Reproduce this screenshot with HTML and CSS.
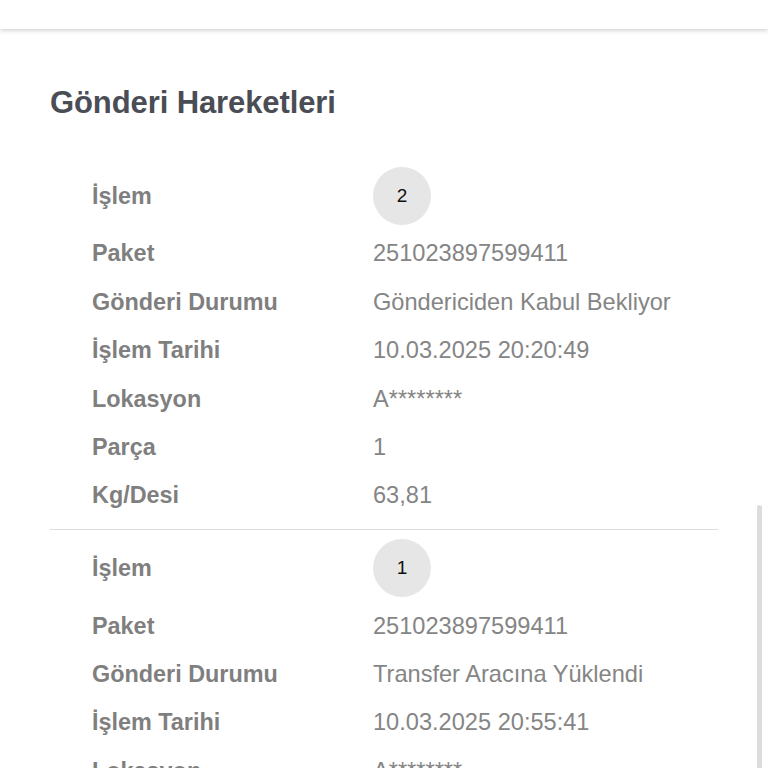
FILE: index.html
```html
<!DOCTYPE html>
<html lang="tr">
<head>
<meta charset="utf-8">
<title>Gönderi Hareketleri</title>
<link rel="stylesheet" href="styles.css">
</head>
<body>
<header class="topbar"></header>
<main class="content">
  <h2 class="title">Gönderi Hareketleri</h2>
  <section class="entry">
    <div class="row row-step"><span class="label">İşlem</span><span class="badge">2</span></div>
    <div class="row"><span class="label">Paket</span><span class="value">251023897599411</span></div>
    <div class="row"><span class="label">Gönderi Durumu</span><span class="value">Göndericiden Kabul Bekliyor</span></div>
    <div class="row"><span class="label">İşlem Tarihi</span><span class="value">10.03.2025 20:20:49</span></div>
    <div class="row"><span class="label">Lokasyon</span><span class="value">A********</span></div>
    <div class="row"><span class="label">Parça</span><span class="value">1</span></div>
    <div class="row"><span class="label">Kg/Desi</span><span class="value">63,81</span></div>
  </section>
  <section class="entry">
    <div class="row row-step"><span class="label">İşlem</span><span class="badge">1</span></div>
    <div class="row"><span class="label">Paket</span><span class="value">251023897599411</span></div>
    <div class="row"><span class="label">Gönderi Durumu</span><span class="value">Transfer Aracına Yüklendi</span></div>
    <div class="row"><span class="label">İşlem Tarihi</span><span class="value">10.03.2025 20:55:41</span></div>
    <div class="row"><span class="label">Lokasyon</span><span class="value">A********</span></div>
    <div class="row"><span class="label">Parça</span><span class="value">1</span></div>
    <div class="row"><span class="label">Kg/Desi</span><span class="value">63,81</span></div>
  </section>
</main>
<div class="scrollbar"></div>
</body>
</html>
```
FILE: styles.css
```css
html, body {
  margin: 0;
  padding: 0;
  background: #ffffff;
  height: 768px;
  overflow: hidden;
}
body {
  font-family: "Liberation Sans", Arial, sans-serif;
}
.topbar {
  height: 29px;
  background: #ffffff;
  box-shadow: 0 1px 5px rgba(0, 0, 0, 0.22);
  position: relative;
  z-index: 1;
}
.content {
  padding: 0 50px;
}
.title {
  margin: 55px 0 0 0;
  font-size: 31px;
  line-height: 37px;
  font-weight: bold;
  color: #4b4d56;
  letter-spacing: -0.1px;
}
.entry {
  margin-top: 37px;
  padding: 9px 0 9px 42px;
  border-bottom: 1px solid #dcdcdc;
}
.entry + .entry {
  margin-top: 0;
}
.row {
  display: grid;
  grid-template-columns: 281px 1fr;
  align-items: center;
  height: 48.4px;
}
.row-step {
  height: 58px;
  margin-bottom: 4.8px;
}
.label {
  font-size: 23.4px;
  font-weight: bold;
  color: #7f7f80;
}
.value {
  font-size: 23.6px;
  color: #858585;
}
.badge {
  width: 58px;
  height: 58px;
  border-radius: 50%;
  background: #e6e6e6;
  color: #111111;
  font-size: 19px;
  display: flex;
  align-items: center;
  justify-content: center;
}
.scrollbar {
  position: fixed;
  right: 6px;
  top: 505px;
  width: 5px;
  height: 300px;
  border-radius: 3px;
  background: #dcdcdc;
}
```
